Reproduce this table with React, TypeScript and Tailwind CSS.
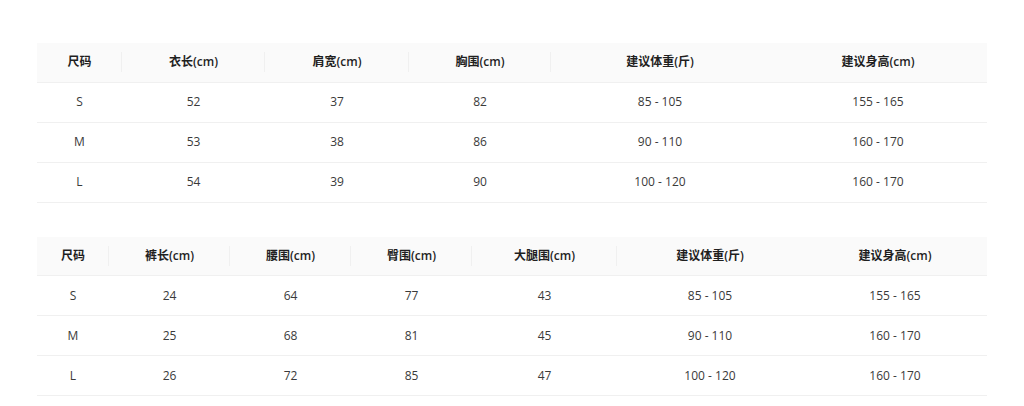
type Row = string[];

interface SizeTableProps {
  columns: { title: string; width: number }[];
  rows: Row[];
}

/** Plain size chart: grey header strip with thin dividers, hairline rows. */
function SizeTable({ columns, rows }: SizeTableProps) {
  return (
    <table className="w-[950px] table-fixed border-collapse text-[12px] text-[#3a3a3a]">
      <colgroup>
        {columns.map((c) => (
          <col key={c.title} style={{ width: c.width }} />
        ))}
      </colgroup>
      <thead>
        <tr className="h-[39px]">
          {columns.map((c, i) => (
            <th
              key={c.title}
              className={
                i < columns.length - 2
                  ? "relative bg-[#fafafa] border-b border-[#f0f0f0] p-0 text-center font-semibold text-[#1f1f1f] before:absolute before:right-0 before:top-1/2 before:h-[20px] before:w-px before:-translate-y-1/2 before:bg-[#f0f0f0] before:content-['']"
                  : "bg-[#fafafa] border-b border-[#f0f0f0] p-0 text-center font-semibold text-[#1f1f1f]"
              }
            >
              {c.title}
            </th>
          ))}
        </tr>
      </thead>
      <tbody>
        {rows.map((r) => (
          <tr key={r[0]} className="h-[40px] border-b border-[#f0f0f0]">
            {r.map((v, i) => (
              <td key={i} className="p-0 text-center">
                {v}
              </td>
            ))}
          </tr>
        ))}
      </tbody>
    </table>
  );
}

const tops = [
  { title: "尺码", width: 85 },
  { title: "衣长(cm)", width: 143 },
  { title: "肩宽(cm)", width: 144 },
  { title: "胸围(cm)", width: 142 },
  { title: "建议体重(斤)", width: 218 },
  { title: "建议身高(cm)", width: 218 },
];

const topRows: Row[] = [
  ["S", "52", "37", "82", "85 - 105", "155 - 165"],
  ["M", "53", "38", "86", "90 - 110", "160 - 170"],
  ["L", "54", "39", "90", "100 - 120", "160 - 170"],
];

const pants = [
  { title: "尺码", width: 72 },
  { title: "裤长(cm)", width: 121 },
  { title: "腰围(cm)", width: 121 },
  { title: "臀围(cm)", width: 121 },
  { title: "大腿围(cm)", width: 145 },
  { title: "建议体重(斤)", width: 186 },
  { title: "建议身高(cm)", width: 184 },
];

const pantRows: Row[] = [
  ["S", "24", "64", "77", "43", "85 - 105", "155 - 165"],
  ["M", "25", "68", "81", "45", "90 - 110", "160 - 170"],
  ["L", "26", "72", "85", "47", "100 - 120", "160 - 170"],
];

export default function App() {
  return (
    <div
      className="min-h-[406px] bg-white pl-[37px] pt-[43px]"
      style={{ fontFamily: '"Open Sans", "Noto Sans CJK SC", sans-serif' }}
    >
      <div className="flex flex-col gap-[34px]">
        <SizeTable columns={tops} rows={topRows} />
        <SizeTable columns={pants} rows={pantRows} />
      </div>
    </div>
  );
}
